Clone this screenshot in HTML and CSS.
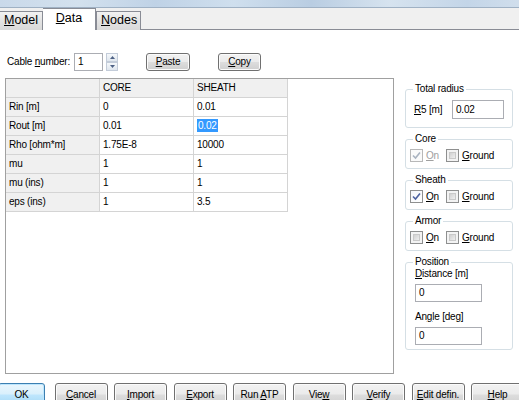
FILE: index.html
```html
<!DOCTYPE html>
<html>
<head>
<meta charset="utf-8">
<link rel="stylesheet" href="styles.css">
</head>
<body>
<div class="win">
  <div class="titlebar"></div>
  <div class="tabbar">
    <div class="tab"><u>M</u>odel</div>
    <div class="tab tab-active"><u>D</u>ata</div>
    <div class="tab"><u>N</u>odes</div>
  </div>
  <div class="page">
    <div class="toolbar">
      <span class="lbl-cable">Cable <u>n</u>umber:</span>
      <span class="edit edit-cable">1</span>
      <span class="spin">
        <span class="spin-btn"><svg width="5" height="3" viewBox="0 0 5 3"><path d="M0 3 L2.5 0 L5 3 Z" fill="#4d6185"/></svg></span>
        <span class="spin-btn"><svg width="5" height="3" viewBox="0 0 5 3"><path d="M0 0 L2.5 3 L5 0 Z" fill="#4d6185"/></svg></span>
      </span>
      <button class="btn btn-paste"><u>P</u>aste</button>
      <button class="btn btn-copy"><u>C</u>opy</button>
    </div>
    <div class="main">
      <div class="gridbox">
        <table class="grid">
          <tr><td class="fx"></td><td class="fx">CORE</td><td class="fx">SHEATH</td></tr>
          <tr><td class="fx">Rin [m]</td><td>0</td><td>0.01</td></tr>
          <tr><td class="fx">Rout [m]</td><td>0.01</td><td><span class="sel">0.02</span></td></tr>
          <tr><td class="fx">Rho [ohm*m]</td><td>1.75E-8</td><td>10000</td></tr>
          <tr><td class="fx">mu</td><td>1</td><td>1</td></tr>
          <tr><td class="fx">mu (ins)</td><td>1</td><td>1</td></tr>
          <tr><td class="fx">eps (ins)</td><td>1</td><td>3.5</td></tr>
        </table>
      </div>
      <div class="side">
        <fieldset class="grp grp-tr">
          <legend>Total radius</legend>
          <div class="row-r5"><span class="lbl-r5"><u>R</u>5 [m]</span><span class="edit edit-r5">0.02</span></div>
        </fieldset>
        <fieldset class="grp grp-chk">
          <legend>Core</legend>
          <div class="chkrow">
            <span class="chk chk-dis"><svg width="9" height="9" viewBox="0 0 9 9"><path d="M1 4.5 L3.5 7 L8 1.5" fill="none" stroke="#a9b3c0" stroke-width="1.6"/></svg></span><span class="clbl dis"><u>O</u>n</span>
            <span class="chk chk-off"></span><span class="clbl"><u>G</u>round</span>
          </div>
        </fieldset>
        <fieldset class="grp grp-chk">
          <legend>Sheath</legend>
          <div class="chkrow">
            <span class="chk chk-on"><svg width="9" height="9" viewBox="0 0 9 9"><path d="M1 4.5 L3.5 7 L8 1.5" fill="none" stroke="#4c62a0" stroke-width="1.6"/></svg></span><span class="clbl"><u>O</u>n</span>
            <span class="chk chk-off"></span><span class="clbl"><u>G</u>round</span>
          </div>
        </fieldset>
        <fieldset class="grp grp-chk">
          <legend>Armor</legend>
          <div class="chkrow">
            <span class="chk chk-off"></span><span class="clbl"><u>O</u>n</span>
            <span class="chk chk-off"></span><span class="clbl"><u>G</u>round</span>
          </div>
        </fieldset>
        <fieldset class="grp grp-pos">
          <legend>Position</legend>
          <div class="plbl"><u>D</u>istance [m]</div>
          <div class="edit edit-pos">0</div>
          <div class="plbl plbl2">An<u>g</u>le [deg]</div>
          <div class="edit edit-pos">0</div>
        </fieldset>
      </div>
    </div>
    <div class="buttons">
      <button class="btn bbtn btn-ok">OK</button>
      <button class="btn bbtn"><u>C</u>ancel</button>
      <button class="btn bbtn"><u>I</u>mport</button>
      <button class="btn bbtn"><u>E</u>xport</button>
      <button class="btn bbtn">Run <u>A</u>TP</button>
      <button class="btn bbtn">Vie<u>w</u></button>
      <button class="btn bbtn"><u>V</u>erify</button>
      <button class="btn bbtn"><u>E</u>dit defin.</button>
      <button class="btn bbtn"><u>H</u>elp</button>
    </div>
  </div>
</div>
</body>
</html>
```
FILE: styles.css
```css
html, body {
  margin: 0;
  padding: 0;
  background: #ffffff;
}
body {
  width: 519px;
  height: 400px;
  overflow: hidden;
  font-family: "Liberation Sans", Arial, sans-serif;
  font-size: 10px;
  letter-spacing: -0.2px;
  color: #000;
}
u { text-decoration: underline; text-underline-offset: 1px; }
.win { width: 519px; height: 400px; overflow: hidden; }

.titlebar {
  height: 7px;
  border-bottom: 1px solid #9fb1c4;
  background: linear-gradient(90deg, #c9d9ea 0%, #d3e1ee 15%, #bfd2e6 30%, #cfdfee 45%, #b9cde2 60%, #d6e3ef 75%, #c3d5e8 90%, #d0deec 100%);
}
.tabbar {
  height: 21px;
  background: #f0f0f0;
  border-bottom: 1px solid #898c95;
  display: flex;
  align-items: flex-end;
  font-size: 12.5px;
  letter-spacing: 0;
}
.tab {
  height: 19px;
  margin-bottom: -1px;
  box-sizing: border-box;
  border: 1px solid #898c95;
  border-bottom: none;
  background: linear-gradient(#f2f2f2, #e3e3e3 50%, #d9d9d9);
  padding: 0 4px;
  line-height: 17px;
  color: #000;
}
.tab:first-child { width: 43px; border-left: none; }
.tab:nth-child(3) { width: 45px; }
.tab-active {
  width: 53px;
  height: 22px;
  background: #ffffff;
  border-color: #898c95;
  text-align: center;
  line-height: 18px;
  border-left: none;
}

.page { background: #fff; }

.toolbar {
  display: flex;
  align-items: center;
  height: 19px;
  padding-top: 22px;
}
.lbl-cable { margin-left: 7px; width: 67px; }
.edit {
  display: block;
  box-sizing: border-box;
  border: 1px solid #abadb3;
  background: #fff;
  padding-left: 3px;
}
.edit-cable { width: 29px; height: 18px; line-height: 16px; }
.spin {
  display: flex;
  flex-direction: column;
  margin-left: 3px;
  width: 12px;
  height: 18px;
}
.spin-btn {
  height: 9px;
  box-sizing: border-box;
  border: 1px solid #c3ccd9;
  background: linear-gradient(#f5f8fb, #dfe6ee);
  display: flex;
  align-items: center;
  justify-content: center;
}
.btn {
  font-family: inherit;
  font-size: 10px;
  letter-spacing: -0.2px;
  color: #000;
  box-sizing: border-box;
  border: 1px solid #707070;
  border-radius: 3px;
  background: linear-gradient(#f2f2f2 0%, #ebebeb 48%, #dddddd 52%, #cfcfcf 100%);
  box-shadow: inset 0 0 0 1px #fbfbfb;
  padding: 0;
  margin: 0;
}
.btn-paste { margin-left: 28px; width: 44px; height: 18px; }
.btn-copy { margin-left: 28px; width: 43px; height: 18px; }

.main {
  display: flex;
  margin-top: 7px;
  height: 295px;
}
.gridbox {
  margin-left: 5px;
  width: 389px;
  height: 296px;
  box-sizing: border-box;
  border: 1px solid #a0a0a0;
  background: #fff;
}
.grid {
  border-collapse: separate;
  border-spacing: 0;
}
.grid td {
  width: 90px;
  height: 18px;
  padding: 0 0 0 3px;
  border-right: 1px solid #d4d4d4;
  border-bottom: 1px solid #d4d4d4;
  line-height: 18px;
  white-space: nowrap;
  vertical-align: middle;
}
.grid td.fx { background: #f0f0f0; }
.sel {
  background: #3399ff;
  color: #fff;
  padding: 1px 1px;
}

.side {
  margin-left: 11px;
  margin-top: 5px;
  width: 108px;
  display: flex;
  flex-direction: column;
  gap: 5px;
}
.grp {
  margin: 0;
  padding: 0 5px 0 4px;
  border: 1px solid #d5dfe5;
  border-radius: 3px;
  min-width: 0;
}
.grp legend {
  padding: 0 2px;
  margin-left: 3px;
  line-height: 12px;
  color: #000;
}
.grp-tr { padding-bottom: 8px; }
.row-r5 {
  display: flex;
  align-items: center;
  margin-top: 5px;
  height: 19px;
}
.lbl-r5 { margin-left: 4px; width: 38px; }
.edit-r5 { width: 52px; height: 19px; line-height: 17px; }

.grp-chk { padding-bottom: 6px; }
.chkrow {
  display: flex;
  align-items: center;
  height: 13px;
  margin-top: 4px;
}
.chk {
  width: 13px;
  height: 13px;
  box-sizing: border-box;
  border: 1px solid #8e8f8f;
  display: flex;
  align-items: center;
  justify-content: center;
  flex: none;
}
.chk-off {
  background: #fff;
  box-shadow: inset 0 0 0 2px #f3f3f3, inset 0 0 0 3px #c9c9c9;
  background-image: linear-gradient(135deg, #cbcbcb, #f4f4f4);
  background-size: 7px 7px;
  background-position: 2px 2px;
  background-repeat: no-repeat;
}
.chk-on { background: linear-gradient(135deg, #f4f6fa, #ffffff); }
.chk-dis { border-color: #b8b8b8; background: #fafafa; }
.clbl { margin-left: 3px; margin-right: 7px; }
.clbl.dis { color: #a0a0a0; }

.grp-pos { padding-bottom: 4px; }
.plbl { line-height: 12px; margin-left: 5px; }
.plbl2 { margin-top: 9px; }
.edit-pos { width: 67px; height: 18px; line-height: 16px; margin-top: 4px; margin-left: 5px; }

.buttons {
  display: flex;
  margin-top: 10px;
  gap: 6.5px;
}
.bbtn { width: 53px; height: 23px; flex: none; }
.btn-ok {
  width: 47px;
  margin-left: -2px;
  margin-right: 3px;
  border-color: #3c7fb1;
  box-shadow: inset 0 0 0 1px #bde6fd;
  background: linear-gradient(#eaf6fd 0%, #d9f0fc 48%, #bee6fd 52%, #a7d9f5 100%);
}
```
